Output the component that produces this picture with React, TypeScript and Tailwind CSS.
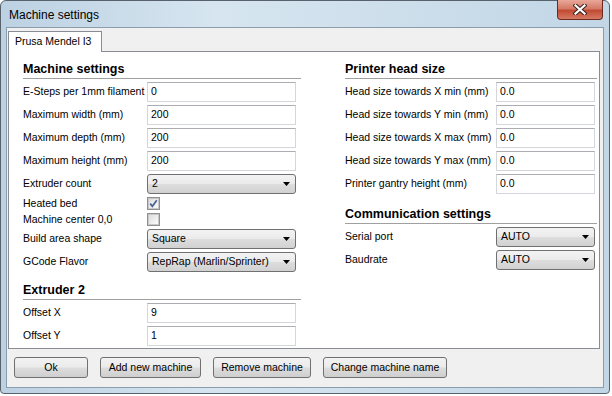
import type { ReactNode } from 'react'

const leftInputs = [
  { label: 'E-Steps per 1mm filament', value: '0' },
  { label: 'Maximum width (mm)', value: '200' },
  { label: 'Maximum depth (mm)', value: '200' },
  { label: 'Maximum height (mm)', value: '200' },
]

const headInputs = [
  { label: 'Head size towards X min (mm)', value: '0.0' },
  { label: 'Head size towards Y min (mm)', value: '0.0' },
  { label: 'Head size towards X max (mm)', value: '0.0' },
  { label: 'Head size towards Y max (mm)', value: '0.0' },
  { label: 'Printer gantry height (mm)', value: '0.0' },
]

function Heading({ children, className = '' }: { children: ReactNode; className?: string }) {
  return (
    <div
      className={`h-[18px] border-b border-[#a0a0a0] text-[12.5px] font-bold leading-[17px] text-black ${className}`}
    >
      {children}
    </div>
  )
}

function Row({ label, labelW, children }: { label: string; labelW: string; children: ReactNode }) {
  return (
    <div className="flex items-center">
      <div className={`${labelW} shrink-0 whitespace-nowrap text-[10.5px] text-black`}>{label}</div>
      {children}
    </div>
  )
}

function TextInput({ value, w }: { value: string; w: string }) {
  return (
    <div
      className={`${w} flex h-[20px] items-center border border-[#d4d6dc] border-t-[#abadb3] bg-white pl-[3px] text-[10.5px] text-black`}
    >
      {value}
    </div>
  )
}

function Select({ value, w }: { value: string; w: string }) {
  return (
    <div
      className={`${w} flex h-[20px] items-center justify-between rounded-[3px] border border-[#707070] bg-[linear-gradient(#f3f3f3_0%,#ebebeb_48%,#dddddd_52%,#d1d1d1_100%)] pl-[4px] pr-[5px] text-[10.5px] text-black`}
    >
      <span>{value}</span>
      <svg width="7" height="4" viewBox="0 0 7 4">
        <polygon points="0,0 7,0 3.5,4" fill="#000" />
      </svg>
    </div>
  )
}

function Checkbox({ checked }: { checked?: boolean }) {
  return (
    <div className="flex h-[13px] w-[13px] items-center justify-center border border-[#8e8f8f] bg-white">
      <div className="relative h-[11px] w-[11px] border border-[#c8c8c8] bg-[linear-gradient(135deg,#dcdcdc,#fbfbfb)]">
        {checked && (
          <svg className="absolute -left-px -top-px" width="11" height="11" viewBox="0 0 11 11">
            <path d="M2.2 5.6 L4.4 8.3 L8.8 2.2" fill="none" stroke="#4a5f96" strokeWidth="1.7" />
          </svg>
        )}
      </div>
    </div>
  )
}

function Button({ children, w }: { children: ReactNode; w: string }) {
  return (
    <div
      className={`${w} flex h-[21px] items-center justify-center rounded-[3px] border border-[#707070] bg-[linear-gradient(#f2f2f2_0%,#ebebeb_48%,#dddddd_52%,#cfcfcf_100%)] text-[10.5px] text-black`}
    >
      {children}
    </div>
  )
}

export default function App() {
  return (
    <div className="h-[396px] w-[612px] bg-white font-['Liberation_Sans',Arial,sans-serif]">
      <div className="flex h-[394px] w-[610px] flex-col rounded-t-[6px] rounded-b-[4px] border border-[#58626d] bg-[linear-gradient(90deg,#bcd1e2_0%,#d6e5f0_35%,#cfe0ec_60%,#c2d6e6_100%)] px-[5px] pb-[5px]">
        {/* Title bar */}
        <div className="relative flex h-[26px] items-center">
          <span className="pl-[3px] pt-[2px] text-[12px] text-black">Machine settings</span>
          <div className="absolute -top-px right-[1px] flex h-[20px] w-[46px] items-center justify-center rounded-b-[4px] border border-t-0 border-[#6e2a22] bg-[linear-gradient(#e9a89a_0%,#d47a66_45%,#c04a33_55%,#d77a62_100%)]">
            <svg width="14" height="11" viewBox="0 0 14 11">
              <path d="M2.5 1.5 L11.5 9.5 M11.5 1.5 L2.5 9.5" stroke="#3b2220" strokeWidth="4.2" strokeLinecap="square" />
              <path d="M2.5 1.5 L11.5 9.5 M11.5 1.5 L2.5 9.5" stroke="#ffffff" strokeWidth="2.2" strokeLinecap="square" />
            </svg>
          </div>
        </div>

        {/* Client area */}
        <div className="flex flex-1 flex-col border border-[#8b9cad] bg-[#f0f0f0] pl-[1px] pr-[3px] pt-[3px] pb-[8px]">
          {/* Tab header */}
          <div className="relative z-10 -mb-px flex h-[21px] w-[94px] items-center border border-b-0 border-[#898c95] bg-white pl-[6px] text-[10.5px] text-black">
            Prusa Mendel I3
          </div>

          {/* Tab panel */}
          <div className="flex h-[298px] gap-[44px] border border-[#898c95] bg-white pl-[14px] pt-[9px]">
            {/* Left column */}
            <div className="flex w-[278px] flex-col">
              <Heading className="mb-[3px]">Machine settings</Heading>
              <div className="flex flex-col gap-[3px]">
                {leftInputs.map((r) => (
                  <Row key={r.label} label={r.label} labelW="w-[124px]">
                    <TextInput value={r.value} w="w-[149px]" />
                  </Row>
                ))}
                <Row label="Extruder count" labelW="w-[124px]">
                  <Select value="2" w="w-[149px]" />
                </Row>
                <div className="flex h-[13px] items-center">
                  <div className="w-[124px] shrink-0 text-[10.5px] text-black">Heated bed</div>
                  <Checkbox checked />
                </div>
                <div className="flex h-[13px] items-center">
                  <div className="w-[124px] shrink-0 text-[10.5px] text-black">Machine center 0,0</div>
                  <Checkbox />
                </div>
                <Row label="Build area shape" labelW="w-[124px]">
                  <Select value="Square" w="w-[149px]" />
                </Row>
                <Row label="GCode Flavor" labelW="w-[124px]">
                  <Select value="RepRap (Marlin/Sprinter)" w="w-[149px]" />
                </Row>
              </div>
              <Heading className="mb-[3px] mt-[10px]">Extruder 2</Heading>
              <div className="flex flex-col gap-[3px]">
                <Row label="Offset X" labelW="w-[124px]">
                  <TextInput value="9" w="w-[149px]" />
                </Row>
                <Row label="Offset Y" labelW="w-[124px]">
                  <TextInput value="1" w="w-[149px]" />
                </Row>
              </div>
            </div>

            {/* Right column */}
            <div className="flex w-[252px] flex-col">
              <Heading className="mb-[3px]">Printer head size</Heading>
              <div className="flex flex-col gap-[3px]">
                {headInputs.map((r) => (
                  <Row key={r.label} label={r.label} labelW="w-[151px]">
                    <TextInput value={r.value} w="w-[99px]" />
                  </Row>
                ))}
              </div>
              <Heading className="mb-[3px] mt-[12px]">Communication settings</Heading>
              <div className="flex flex-col gap-[3px]">
                <Row label="Serial port" labelW="w-[151px]">
                  <Select value="AUTO" w="w-[99px]" />
                </Row>
                <Row label="Baudrate" labelW="w-[151px]">
                  <Select value="AUTO" w="w-[99px]" />
                </Row>
              </div>
            </div>
          </div>

          {/* Buttons */}
          <div className="mt-[8px] flex gap-[12px] pl-[6px]">
            <Button w="w-[74px]">Ok</Button>
            <Button w="w-[101px]">Add new machine</Button>
            <Button w="w-[98px]">Remove machine</Button>
            <Button w="w-[124px]">Change machine name</Button>
          </div>
        </div>
      </div>
    </div>
  )
}
